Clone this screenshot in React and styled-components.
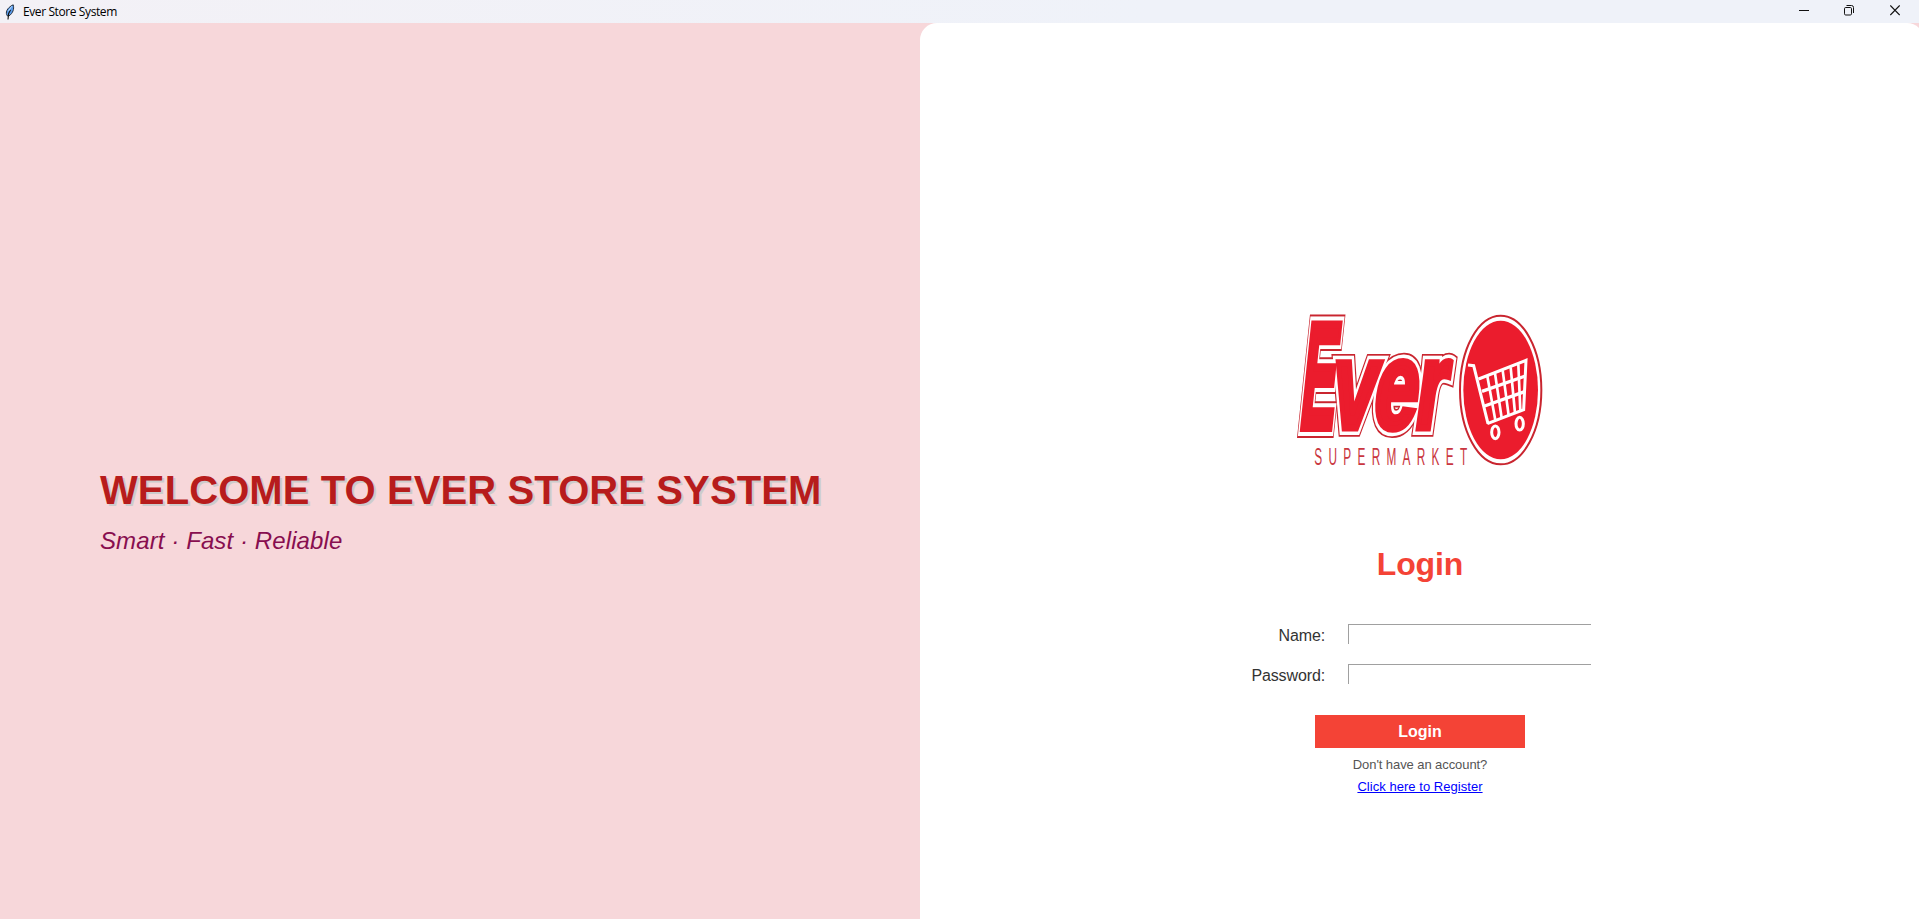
import React from "react";
import styled, { createGlobalStyle } from "styled-components";

const Global = createGlobalStyle`
  * { box-sizing: border-box; }
  html, body { margin: 0; padding: 0; overflow: hidden; }
  body { font-family: "Liberation Sans", Arial, sans-serif; }
`;

const Window = styled.div`
  display: flex;
  flex-direction: column;
  width: 100vw;
  height: 100vh;
  overflow: hidden;
  background: #f7d7da;
`;

const TitleBar = styled.header`
  display: flex;
  align-items: center;
  flex: 0 0 23px;
  padding-left: 4px;
  background: linear-gradient(90deg, #f3f1f6 0%, #eff2f9 60%);
`;

const WindowTitle = styled.span`
  margin-left: 8px;
  flex: 1;
  font: 12px/23px "Open Sans", "Noto Sans", sans-serif;
  letter-spacing: -0.4px;
  color: #000;
`;

const WindowButton = styled.button`
  display: flex;
  align-items: center;
  justify-content: center;
  width: ${(p) => p.$width}px;
  height: 23px;
  padding: 0 0 2px;
  border: 0;
  background: none;
`;

const Content = styled.main`
  display: flex;
  flex: 1;
  min-height: 0;
`;

const Welcome = styled.section`
  flex: 0 0 920px;
  padding: 444px 0 0 100px;
`;

const Headline = styled.h1`
  margin: 0;
  font-size: 40px;
  line-height: 46px;
  font-weight: 700;
  white-space: nowrap;
  letter-spacing: 0.1px;
  color: #b71c1c;
  text-shadow: 2px 2px 0 #cccccc;
`;

const Tagline = styled.p`
  margin: 14px 0 0;
  font-size: 24px;
  line-height: 28px;
  font-style: italic;
  white-space: nowrap;
  letter-spacing: 0.1px;
  color: #880e4f;
`;

const LoginPanel = styled.section`
  display: flex;
  flex-direction: column;
  align-items: center;
  flex: 0 0 1004px;
  padding: 277px 4px 0 0;
  border-radius: 17px 17px 0 0;
  background: #fff;
`;

const Logo = styled.svg`
  display: block;
  width: 280px;
  height: 180px;
`;

const FormTitle = styled.h2`
  margin: 66px 0 0;
  font-size: 32px;
  line-height: 36px;
  font-weight: 700;
  letter-spacing: -0.1px;
  color: #f44336;
`;

const Fields = styled.form`
  display: grid;
  grid-template-columns: 76px 243px;
  column-gap: 23px;
  row-gap: 20px;
  margin: 42px 0 0;
  justify-items: end;
`;

const Label = styled.label`
  font-size: 16px;
  line-height: 20px;
  padding-top: 2px;
  height: 20px;
  letter-spacing: -0.12px;
  color: #333;
`;

const Entry = styled.input`
  width: 243px;
  height: 20px;
  padding: 0 2px;
  border: 0 solid #a0a0a0;
  border-width: 1px 0 0 1px;
  border-radius: 0;
  outline: 0;
  background: #fff;
`;

const Submit = styled.button`
  width: 210px;
  height: 33px;
  margin-top: 31px;
  padding: 0;
  border: 0;
  background: #f44336;
  color: #fff;
  font: 700 16px/33px "Liberation Sans", Arial, sans-serif;
`;

const Hint = styled.p`
  margin: 9px 0 0;
  font-size: 13px;
  line-height: 16px;
  letter-spacing: -0.08px;
  color: #555;
`;

const RegisterLink = styled.a`
  margin-top: 6px;
  font-size: 13px;
  line-height: 16px;
  letter-spacing: 0.04px;
  color: #0000ff;
  text-decoration: underline;
`;

const FeatherIcon = () => (
  <svg width="11" height="16" viewBox="0 0 11 16">
    <path d="M3.500 12C1 9 2.500 4 9.200.8c1.200 4-.2 8.400-4.300 11.200z" fill="#5b9bea" stroke="#24303f" strokeWidth="1" />
    <path d="M6.500 6 4.600 9.500 4 15.500" fill="none" stroke="#111" strokeWidth="1.100" />
    <path d="M7.800 2.200 4.500 7" stroke="#b9dcff" strokeWidth="1" />
  </svg>
);

const CONTROLS = [
  { name: "Minimize", width: 46, draw: <path d="M0 5.500h10" /> },
  {
    name: "Restore",
    width: 44,
    draw: (
      <>
        <rect x=".5" y="2.500" width="7" height="7.500" rx="1.200" />
        <path d="M2.500.5h5q2 0 2 2v5.500" />
      </>
    ),
  },
  { name: "Close", width: 48, draw: <path d="M.3.5l9.400 9.500M9.700.5L.3 10" strokeWidth="1.200" /> },
];

const WordmarkText = styled.text`
  font-family: "Liberation Sans", Arial, sans-serif;
  font-weight: 700;
  stroke-linejoin: miter;
  stroke-miterlimit: 3;
  vector-effect: non-scaling-stroke;
`;

function Wordmark() {
  return (
    <>
      <defs>
        <g id="ever">
          <WordmarkText transform="translate(54 384) skewX(-6) scale(.35 1)" fontSize="452">E</WordmarkText>
          <WordmarkText transform="translate(146 384) skewX(-8) scale(.64 1)" fontSize="370" letterSpacing="-9">ver</WordmarkText>
        </g>
      </defs>
      <use href="#ever" fill="#c9252f" stroke="#c9252f" strokeWidth="15" />
      <use href="#ever" fill="#fff" stroke="#fff" strokeWidth="12" />
      <use href="#ever" fill="#eb1c2d" stroke="#eb1c2d" strokeWidth="6" />
    </>
  );
}

function Cart() {
  return (
    <g fill="none" stroke="#fff">
      <path d="M564 195l17 2 43 174M596 237l142-56-7 148-109 42" strokeWidth="9" />
      <path d="M606 274l130-46M614 318l120-43" strokeWidth="10" />
      <path d="M622 229l24 132M645 220l20 134M668 211l18 136M692 202l13 137M715 193l6 140" strokeWidth="8" />
      <ellipse cx="646" cy="397" rx="11" ry="19" strokeWidth="9" />
      <ellipse cx="719" cy="371" rx="11" ry="19" strokeWidth="9" />
    </g>
  );
}

function StoreLogo() {
  return (
    <Logo viewBox="0 0 840 540" role="img" aria-label="Ever Supermarket">
      <Wordmark />
      <ellipse cx="662" cy="270" rx="122" ry="223" fill="#fff" stroke="#c9252f" strokeWidth="6" />
      <ellipse cx="662" cy="270" rx="112" ry="208" fill="#eb1c2d" />
      <Cart />
      <text
        transform="translate(103 494) scale(.48 1)"
        fontFamily="Liberation Sans"
        fontSize="74"
        textLength="955"
        lengthAdjust="spacing"
        fill="#c93640"
      >
        SUPERMARKET
      </text>
    </Logo>
  );
}

export default function App() {
  return (
    <Window>
      <Global />
      <TitleBar>
        <FeatherIcon />
        <WindowTitle>Ever Store System</WindowTitle>
        {CONTROLS.map((c) => (
          <WindowButton key={c.name} aria-label={c.name} $width={c.width}>
            <svg width="10" height="11" viewBox="0 0 10 11" fill="none" stroke="#111" strokeWidth="1">
              {c.draw}
            </svg>
          </WindowButton>
        ))}
      </TitleBar>
      <Content>
        <Welcome>
          <Headline>WELCOME TO EVER STORE SYSTEM</Headline>
          <Tagline>Smart · Fast · Reliable</Tagline>
        </Welcome>
        <LoginPanel>
          <StoreLogo />
          <FormTitle>Login</FormTitle>
          <Fields>
            <Label htmlFor="name">Name:</Label>
            <Entry id="name" />
            <Label htmlFor="password">Password:</Label>
            <Entry id="password" type="password" />
          </Fields>
          <Submit>Login</Submit>
          <Hint>Don't have an account?</Hint>
          <RegisterLink>Click here to Register</RegisterLink>
        </LoginPanel>
      </Content>
    </Window>
  );
}
